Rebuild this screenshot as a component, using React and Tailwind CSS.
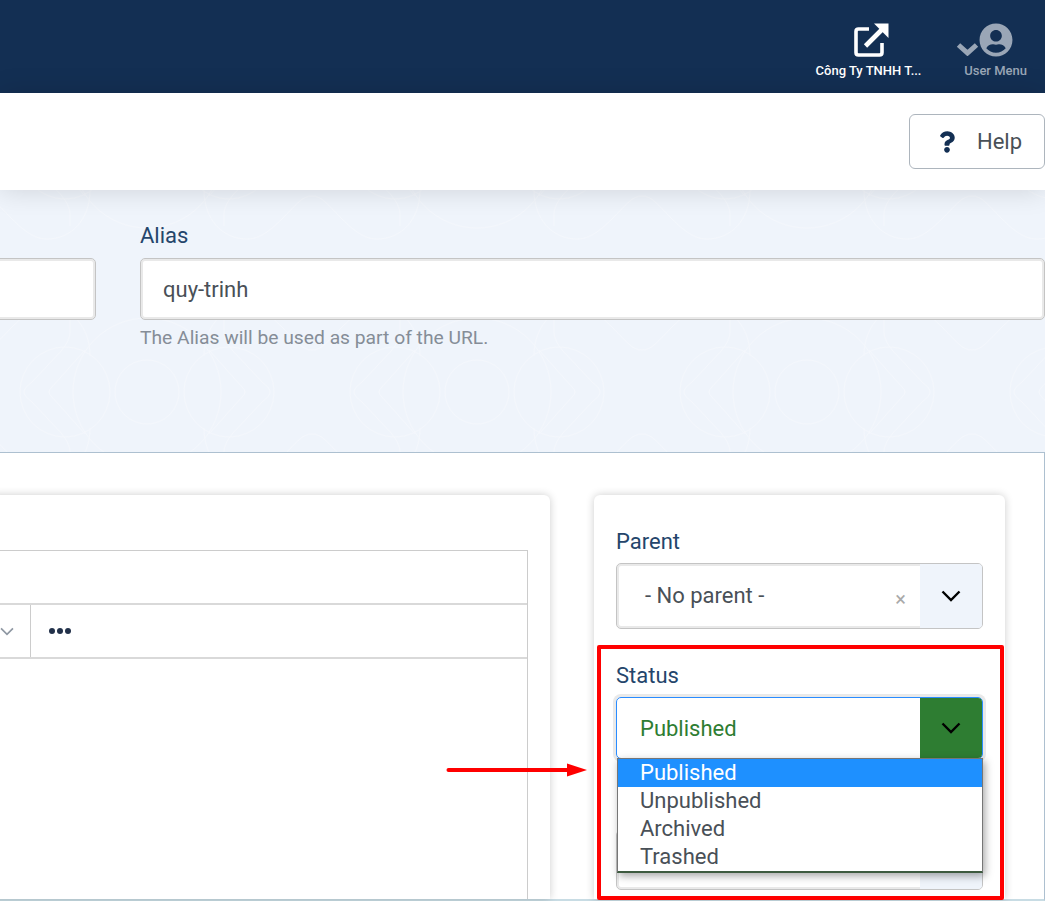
import { FaUserCircle, FaQuestion } from 'react-icons/fa';

function Chevron({ className = 'text-black' }) {
  return (
    <svg width="20" height="12" viewBox="0 0 20 12" fill="none" className={className}>
      <path d="M1.5 1.5 L10 10 L18.5 1.5" stroke="currentColor" strokeWidth="2.4" />
    </svg>
  );
}

function Background() {
  const quarter = (
    <g>
      <path d="M-165 42 C-155 42 -150 50 -135 65 C-120 80 -110 85 -100 85 C-75 85 -57 65 -57 36" />
      <path d="M-77 72 L-77 60 Q-77 52 -85 42 L-115 10 Q-123 4 -123 0" />
      <path d="M-62 42 L-95 5 Q-98 2 -98 0" />
    </g>
  );
  return (
    <svg className="absolute inset-0 h-full w-full" aria-hidden="true">
      <defs>
        <pattern id="tile" width="330" height="238" patternUnits="userSpaceOnUse" patternTransform="translate(-18 83)">
          <g transform="translate(165 119)" fill="none" stroke="#f4f7fc" strokeWidth="1">
            <circle r="32" />
            <circle r="74" />
            <circle cx="-82" r="45" />
            <circle cx="82" r="45" />
            {quarter}
            <g transform="scale(-1 1)">{quarter}</g>
            <g transform="scale(1 -1)">{quarter}</g>
            <g transform="scale(-1 -1)">{quarter}</g>
          </g>
        </pattern>
      </defs>
      <rect width="100%" height="100%" fill="url(#tile)" />
    </svg>
  );
}

export default function App() {
  return (
    <div className="relative flex h-[901px] w-[1045px] flex-col overflow-hidden bg-white font-['Roboto',sans-serif]">
      <header className="flex h-[93px] shrink-0 items-start justify-end bg-[#132f53]">
        <div className="mr-[43px] flex w-[105px] flex-col items-center pt-[23px]">
          <svg width="35" height="34" viewBox="0 0 35 34" fill="none" className="ml-[5px] text-white">
            <path d="M15 6 H4.5 Q2 6 2 8.5 V29.5 Q2 32 4.5 32 H25.5 Q28 32 28 29.5 V20" stroke="currentColor" strokeWidth="3.6" />
            <path d="M11.5 23 L29 5.5" stroke="currentColor" strokeWidth="4.6" />
            <path d="M20 0.5 H34.5 V15 Z" fill="currentColor" />
          </svg>
          <span className="mt-[6px] text-[13px] font-medium leading-[16px] whitespace-nowrap text-white">Công Ty TNHH T...</span>
        </div>
        <div className="mr-[18px] flex w-[63px] flex-col items-end pt-[23px] text-[#9aa6b6]">
          <div className="mr-[14px] flex items-end">
            <svg width="23" height="14" viewBox="0 0 23 14" fill="none" className="mb-[1px] shrink-0">
              <path d="M2.5 3 L11.5 11 L20.5 3" stroke="currentColor" strokeWidth="5" />
            </svg>
            <FaUserCircle className="h-[34px] w-[34px] shrink-0" />
          </div>
          <span className="mt-[6px] text-[13px] font-medium leading-[16px] whitespace-nowrap">User Menu</span>
        </div>
      </header>

      <div className="z-10 flex h-[97px] shrink-0 items-center justify-end bg-white shadow-[0_0_26px_rgba(0,0,0,0.14)]">
        <button className="flex h-[55px] w-[136px] items-center rounded-[6px] border border-[#adb5bd] bg-white pl-[29px]">
          <FaQuestion className="h-[22px] w-[16px] text-[#132f53]" />
          <span className="ml-[22px] text-[22px] text-[#495057]">Help</span>
        </button>
      </div>

      <section className="relative h-[262px] shrink-0 bg-[#eff4fb]">
        <Background />
        <div className="relative flex gap-[44px] pt-[32px]">
          <div className="-ml-[10px] mt-[36px] h-[62px] w-[106px] rounded-[5px] border border-[#c4c4c4] bg-white shadow-[inset_0_0_0_2px_#e9e9e9]" />
          <div className="flex-1">
            <label className="block text-[22px] leading-[28px] text-[#24456b]">Alias</label>
            <div className="mt-[8px] flex h-[62px] items-center rounded-[5px] border border-[#c4c4c4] bg-white pl-[22px] text-[22px] text-[#495057] shadow-[inset_0_0_0_2px_#e9e9e9]">
              quy-trinh
            </div>
            <p className="mt-[6px] text-[19.25px] leading-[24px] text-[#858d97]">The Alias will be used as part of the URL.</p>
          </div>
        </div>
      </section>

      <main className="flex min-h-0 flex-1 gap-[44px] border-t border-r border-b-[2px] border-t-[#adc0d0] border-r-[#adc0d0] border-b-[#c8dce4] pt-[42px] pr-[39px]">
        <div className="-ml-[10px] flex-1 rounded-t-[6px] bg-white pt-[55px] pr-[22px] shadow-[0_0_8px_rgba(0,0,0,0.2)]">
          <div className="flex h-full flex-col border border-b-0 border-[#cccccc]">
            <div className="h-[54px] border-b-2 border-[#d9d9d9]" />
            <div className="flex h-[54px] border-b-2 border-[#d9d9d9]">
              <div className="flex w-[40px] items-center justify-end border-r border-[#cccccc] pr-[16px]">
                <Chevron className="h-[9px] w-[14px] text-[#8f98a3]" />
              </div>
              <div className="flex items-center gap-[2px] pl-[18px]">
                <span className="h-[6px] w-[6px] rounded-full bg-[#22314a]" />
                <span className="h-[6px] w-[6px] rounded-full bg-[#22314a]" />
                <span className="h-[6px] w-[6px] rounded-full bg-[#22314a]" />
              </div>
            </div>
          </div>
        </div>

        <aside className="w-[411px] shrink-0 rounded-t-[6px] bg-white px-[22px] pt-[33px] shadow-[0_0_8px_rgba(0,0,0,0.2)]">
          <label className="block text-[22px] leading-[28px] text-[#24456b]">Parent</label>
          <div className="mt-[7px] flex h-[66px] overflow-hidden rounded-[5px] border border-[#c4c4c4] shadow-[inset_0_0_0_2px_#e9e9e9]">
            <div className="flex flex-1 items-center pb-[2px] pl-[28px] text-[22px] text-[#495057]">
              <span className="flex-1">- No parent -</span>
              <span className="mt-[8px] mr-[14px] text-[20px] leading-none text-[#a9a9a9]">×</span>
            </div>
            <div className="flex w-[62px] items-center justify-center bg-[#eff4fb]">
              <Chevron />
            </div>
          </div>

          <label className="mt-[33px] block text-[22px] leading-[28px] text-[#24456b]">Status</label>
          <div className="relative mt-[7px]">
            <div className="flex h-[62px] overflow-hidden rounded-[5px] border border-[#2a8cff] ring-3 ring-[#e9e9e9]">
              <div className="flex flex-1 items-center pl-[23px] text-[22px] text-[#2e7d32]">Published</div>
              <div className="flex w-[62px] items-center justify-center bg-[#2e7d32]">
                <Chevron />
              </div>
            </div>
            <ul className="absolute top-[61px] right-0 left-[1px] z-10 border border-b-2 border-[#767676] border-b-[#3d5a3f] bg-white text-[22px] leading-[28px] text-[#495057] shadow-[2px_3px_8px_rgba(0,0,0,0.35)]">
              <li className="bg-[#1e90ff] pl-[22px] text-white">Published</li>
              <li className="pl-[22px]">Unpublished</li>
              <li className="pl-[22px]">Archived</li>
              <li className="pl-[22px]">Trashed</li>
            </ul>
          </div>
          <div className="mt-[71px] flex h-[60px] overflow-hidden rounded-[5px] border border-[#c4c4c4] shadow-[inset_0_0_0_2px_#e9e9e9]">
            <div className="flex-1" />
            <div className="w-[62px] bg-[#eff4fb]" />
          </div>
        </aside>
      </main>

      {/* annotation drawn on top of the screenshot */}
      <div className="absolute top-[645px] left-[597px] z-20 h-[255px] w-[407px] rounded-[2px] border-4 border-[#ff0000]" />
      <svg className="absolute top-[762px] left-[445px] z-20" width="142" height="16" viewBox="0 0 142 16">
        <path d="M3.5 8 H125" stroke="#ff0000" strokeWidth="4" strokeLinecap="round" />
        <path d="M122 1.5 L142 8 L122 14.5 Z" fill="#ff0000" />
      </svg>
    </div>
  );
}
